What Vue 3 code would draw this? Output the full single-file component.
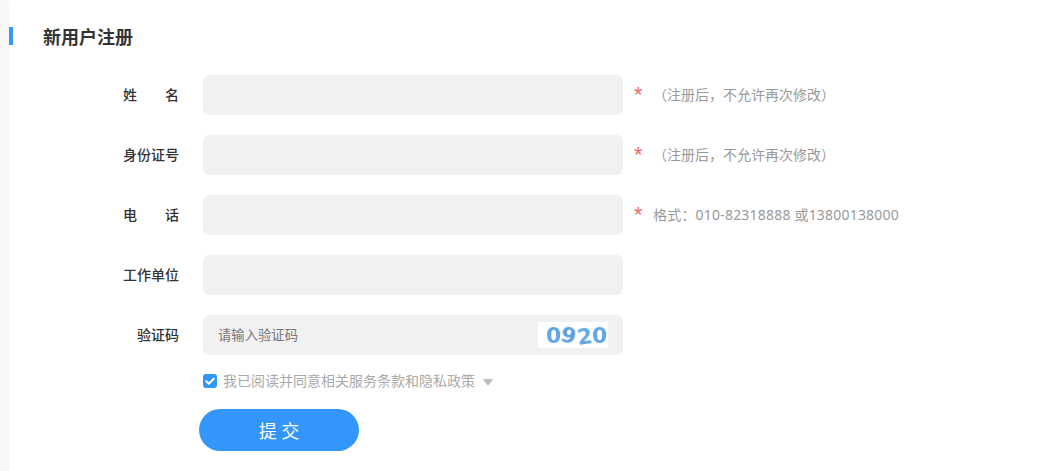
<template>
  <div class="page">
    <div class="strip"></div>
    <div class="panel">
      <h2 class="title">新用户注册</h2>
      <form class="form" @submit.prevent>
        <div v-for="row in rows" :key="row.label" class="row">
          <label class="label" :class="{ spread: row.label.length === 2 }">
            <span v-for="c in row.label" :key="c">{{ c }}</span>
          </label>
          <input class="field" type="text" />
          <span v-if="row.required" class="star">*</span>
          <span v-if="row.hint" class="hint" :class="{ format: row.format }">{{ row.hint }}</span>
        </div>
        <div class="row">
          <label class="label"><span>验证码</span></label>
          <div class="captcha-box">
            <input class="field code" type="text" placeholder="请输入验证码" />
            <div class="captcha">
              <span v-for="(d, i) in digits" :key="i" :class="'d' + i">{{ d }}</span>
            </div>
          </div>
        </div>
        <div class="agree">
          <span class="check">
            <svg viewBox="0 0 14 14" width="14" height="14" fill="none" stroke="#fff" stroke-width="2" stroke-linecap="round" stroke-linejoin="round">
              <polyline points="3.2 7.2 5.9 9.8 10.8 4.6" />
            </svg>
          </span>
          <span class="agree-text">我已阅读并同意相关服务条款和隐私政策</span>
          <span class="caret"></span>
        </div>
        <button class="submit" type="submit">提 交</button>
      </form>
    </div>
  </div>
</template>

<script setup>
const rows = [
  { label: '姓名', required: true, hint: '（注册后，不允许再次修改）' },
  { label: '身份证号', required: true, hint: '（注册后，不允许再次修改）' },
  { label: '电话', required: true, hint: '格式：010-82318888 或13800138000', format: true },
  { label: '工作单位' }
]
const digits = ['0', '9', '2', '0']
</script>

<style>
html, body {
  margin: 0;
  background: #fff;
}
</style>

<style scoped>
.page {
  display: flex;
  height: 471px;
  overflow: hidden;
  font-family: "Noto Sans", "Noto Sans CJK SC", sans-serif;
  background: #f7f7f7;
}

.strip {
  width: 9px;
  flex-shrink: 0;
}

.panel {
  flex: 1;
  background: #fff;
  border-radius: 4px 0 0 0;
  padding-top: 27px;
}

.title {
  margin: 0;
  height: 18px;
  line-height: 20px;
  padding-left: 30px;
  border-left: 4px solid #3a97f0;
  font-size: 18px;
  font-weight: 700;
  color: #333;
}

.form {
  padding: 30px 0 0 114px;
}

.row {
  display: flex;
  align-items: center;
  height: 40px;
  margin-bottom: 20px;
}

.label {
  width: 56px;
  margin-right: 24px;
  display: flex;
  justify-content: flex-end;
  font-size: 14px;
  font-weight: 500;
  line-height: 20px;
  color: #333;
}

.label.spread {
  justify-content: space-between;
}

.field {
  width: 420px;
  height: 40px;
  box-sizing: border-box;
  flex-shrink: 0;
  border: none;
  outline: none;
  border-radius: 6px;
  background: #f1f1f1;
  padding: 0 15px;
  font-family: inherit;
  font-size: 13.33px;
  color: #333;
}

.field::placeholder {
  color: #777;
  opacity: 1;
}

.star {
  margin-left: 11px;
  width: 19px;
  font-size: 22px;
  line-height: 22px;
  color: #ee6a5f;
  font-family: "Liberation Sans", sans-serif;
}

.hint {
  font-size: 14px;
  line-height: 20px;
  color: #999;
}

.hint.format {
  letter-spacing: 0.2px;
}

.captcha-box {
  position: relative;
  width: 420px;
  height: 40px;
}

.captcha {
  position: absolute;
  top: 7px;
  left: 335px;
  width: 70px;
  height: 26px;
  box-sizing: border-box;
  padding-left: 8px;
  background: #fff;
  display: flex;
  align-items: center;
  font-family: "DejaVu Sans", sans-serif;
  font-size: 22px;
  font-weight: 700;
  color: #62a8e4;
  overflow: hidden;
}

.captcha span {
  display: block;
  filter: blur(0.5px);
}

.captcha .d1 {
  transform: rotate(14deg);
  color: #5a9fdc;
}

.captcha .d2 {
  transform: rotate(-8deg) translateY(1px);
}

.agree {
  display: flex;
  align-items: center;
  height: 14px;
  margin: -1px 0 0 80px;
}

.check {
  width: 14px;
  height: 14px;
  border-radius: 3px;
  background: #3296fa;
  display: flex;
}

.agree-text {
  margin-left: 6px;
  font-size: 14px;
  line-height: 20px;
  color: #aaa;
}

.caret {
  margin-left: 8px;
  margin-top: 2px;
  border-left: 5.5px solid transparent;
  border-right: 5.5px solid transparent;
  border-top: 7px solid #bbb;
}

.submit {
  display: block;
  width: 160px;
  height: 42px;
  margin: 21px 0 0 76px;
  border: none;
  border-radius: 21px;
  background: #3296fa;
  color: #fff;
  font-family: inherit;
  font-size: 18px;
  cursor: pointer;
}
</style>
